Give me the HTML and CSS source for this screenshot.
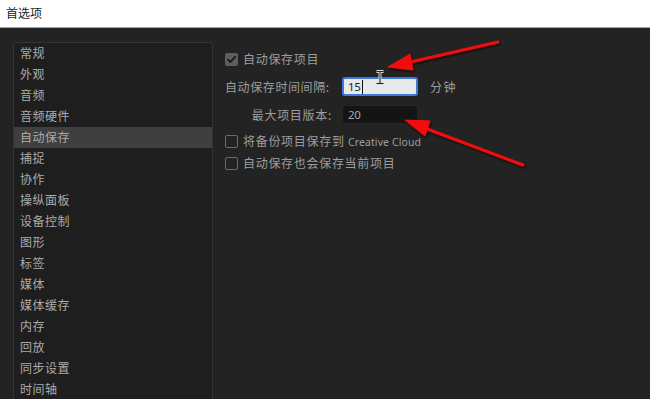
FILE: index.html
```html
<!DOCTYPE html>
<html lang="zh-CN">
<head>
<meta charset="utf-8">
<title>首选项</title>
<link rel="stylesheet" href="styles.css">
</head>
<body>
<div class="window">
  <header class="titlebar">首选项</header>
  <main class="content">
    <nav class="sidebar">
      <div class="item">常规</div>
      <div class="item">外观</div>
      <div class="item">音频</div>
      <div class="item">音频硬件</div>
      <div class="item selected">自动保存</div>
      <div class="item">捕捉</div>
      <div class="item">协作</div>
      <div class="item">操纵面板</div>
      <div class="item">设备控制</div>
      <div class="item">图形</div>
      <div class="item">标签</div>
      <div class="item">媒体</div>
      <div class="item">媒体缓存</div>
      <div class="item">内存</div>
      <div class="item">回放</div>
      <div class="item">同步设置</div>
      <div class="item">时间轴</div>
    </nav>
    <section class="settings">
      <label class="check-row row1">
        <span class="box checked">
          <svg width="11" height="11" viewBox="0 0 11 11"><path d="M2 5.6 L4.4 8 L9 2.8" fill="none" stroke="#1e1e1e" stroke-width="1.9" stroke-linecap="round" stroke-linejoin="round"/></svg>
        </span>
        <span class="label">自动保存项目</span>
      </label>
      <div class="field-row row2">
        <span class="field-label">自动保存时间间隔:</span>
        <span class="input focused">15<span class="caret"></span></span>
        <span class="unit">分钟</span>
      </div>
      <div class="field-row row3">
        <span class="field-label">最大项目版本:</span>
        <span class="input dark">20</span>
      </div>
      <label class="check-row row4">
        <span class="box"></span>
        <span class="label">将备份项目保存到 <span class="latin">Creative Cloud</span></span>
      </label>
      <label class="check-row row5">
        <span class="box"></span>
        <span class="label">自动保存也会保存当前项目</span>
      </label>
    </section>
  </main>
  <svg class="overlay" width="650" height="399" viewBox="0 0 650 399">
    <defs>
      <filter id="sh" x="-20%" y="-20%" width="140%" height="140%">
        <feDropShadow dx="1" dy="1.5" stdDeviation="1.2" flood-color="#000" flood-opacity="0.7"/>
      </filter>
    </defs>
    <g filter="url(#sh)" fill="#f00c0c" stroke="#f00c0c">
      <line x1="498" y1="42" x2="406" y2="63" stroke-width="3" stroke-linecap="round"/>
      <polygon points="388,67 413,70 410,54" stroke-width="1" stroke-linejoin="round"/>
      <line x1="523" y1="165" x2="422" y2="127" stroke-width="3" stroke-linecap="round"/>
      <polygon points="405,120 430,121 425,136" stroke-width="1" stroke-linejoin="round"/>
    </g>
    <g class="ibeam" fill="none" stroke="#222" stroke-width="1">
      <path d="M376.5 71.5 h7 M376.5 83.5 h7 M380 71.5 v12" stroke="#dcdcdc" stroke-width="3"/>
      <path d="M376.5 71.5 h7 M376.5 83.5 h7 M380 71.5 v12"/>
    </g>
  </svg>
</div>
</body>
</html>
```
FILE: styles.css
```css
* { box-sizing: border-box; }
html, body {
  margin: 0;
  padding: 0;
  width: 650px;
  height: 399px;
  overflow: hidden;
  background: #232323;
  font-family: "Noto Sans CJK SC", "Noto Sans", sans-serif;
}
.window {
  position: relative;
  width: 650px;
  height: 399px;
  display: flex;
  flex-direction: column;
  overflow: hidden;
}
.titlebar {
  height: 28px;
  flex: none;
  background: #ffffff;
  border-bottom: 1px solid #a3a3a3;
  color: #1c1c1c;
  font-size: 12px;
  line-height: 26px;
  padding-left: 6px;
}
.content {
  flex: 1;
  min-height: 0;
  display: flex;
  align-items: flex-start;
  padding: 14px 0 0 13px;
  background: #232323;
  overflow: hidden;
}
.sidebar {
  width: 200px;
  height: 357px;
  flex: none;
  background: #1e1e1e;
  border: 1px solid #333333;
  border-bottom: none;
  border-radius: 3px 3px 0 0;
  overflow: hidden;
}
.item {
  height: 21px;
  line-height: 20px;
  padding-left: 6px;
  font-size: 12px;
  letter-spacing: 0.5px;
  color: #ababab;
}
.item.selected {
  background: #3f3f3f;
}
.settings {
  position: relative;
  display: flex;
  flex-direction: column;
  padding: 10px 0 0 12px;
  color: #9e9e9e;
  font-size: 12px;
  letter-spacing: 0.7px;
}
.check-row {
  display: flex;
  align-items: center;
  gap: 5px;
  height: 14px;
}
.row4 { margin-top: 10px; }
.row5 { margin-top: 8px; }
.box {
  width: 13px;
  height: 13px;
  flex: none;
  border: 1.5px solid #6a6a6a;
  border-radius: 2px;
  display: flex;
  align-items: center;
  justify-content: center;
}
.box.checked {
  background: #5e5e5e;
  border-color: #5e5e5e;
}
.label { white-space: nowrap; line-height: 14px; }
.latin {
  font-family: "Noto Sans", sans-serif;
  font-size: 10.5px;
  letter-spacing: 0.1px;
}
.field-row {
  display: flex;
  align-items: center;
  height: 19px;
}
.row2 { margin-top: 11px; }
.row3 { margin-top: 9px; }
.field-label {
  width: 117px;
  flex: none;
  text-align: right;
  padding-right: 10px;
  white-space: nowrap;
  line-height: 14px;
  letter-spacing: 0.7px;
}
.row2 .field-label { letter-spacing: 0.6px; text-align: left; }
.input {
  width: 76px;
  height: 19px;
  flex: none;
  border-radius: 3px;
  font-family: "Noto Sans", sans-serif;
  font-size: 11.5px;
  letter-spacing: -0.3px;
  line-height: 15px;
  display: flex;
  align-items: center;
  padding-left: 4px;
}
.input.focused {
  background: #e9e9e9;
  border: 2px solid #3b7bd8;
  color: #222222;
}
.caret {
  display: inline-block;
  width: 1px;
  height: 14px;
  background: #111;
  margin-left: 1px;
}
.input.dark {
  background: #141414;
  border: 1px solid #262626;
  color: #a9a9a9;
  padding-left: 5px;
}
.unit {
  margin-left: 12px;
  white-space: nowrap;
  letter-spacing: 1.5px;
}
.overlay {
  position: absolute;
  left: 0;
  top: 0;
  pointer-events: none;
}
```
